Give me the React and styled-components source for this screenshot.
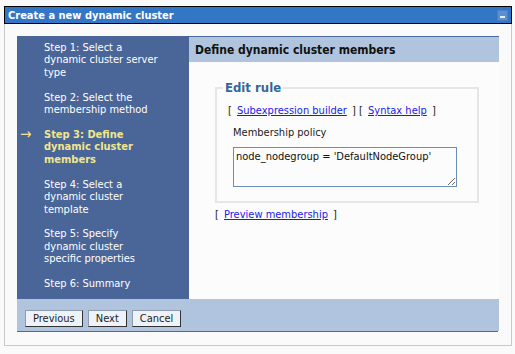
import React from "react";
import styled, { createGlobalStyle } from "styled-components";

const GlobalStyle = createGlobalStyle`
  html, body {
    margin: 0;
    background: #fafafa;
  }
  body {
    font-family: Tahoma, "DejaVu Sans Condensed", "DejaVu Sans", sans-serif;
    font-size: 11px;
  }
`;

const Page = styled.div`
  padding: 6px 3px 0 4px;
  width: 508px;
`;

const TitleBar = styled.div`
  display: flex;
  align-items: center;
  justify-content: space-between;
  height: 16px;
  padding: 0 3px 0 3px;
  background: #3376c6;
  border: 1px solid #000;
  color: #fff;
  font-weight: bold;
  font-size: 11px;
`;

const MinButton = styled.div`
  width: 11px;
  height: 11px;
  background: #5b8fd0;
  border: 1px solid #4a80c4;
  box-sizing: border-box;
  display: flex;
  align-items: flex-end;
  justify-content: center;
  padding-bottom: 2px;

  &::after {
    content: "";
    width: 5px;
    height: 2px;
    background: #e6eef8;
  }
`;

const Body = styled.div`
  border: 1px solid #c8c8c8;
  border-top: none;
  padding: 12px;
  height: 297px;
`;

const Wizard = styled.div`
  display: grid;
  grid-template-columns: 172px 1fr;
  grid-template-rows: 263px 32px;
  width: 480px;
  border: 1px solid #4a6aa3;
  border-left: none;
  border-top: none;
`;

const Nav = styled.ul`
  list-style: none;
  margin: 0;
  padding: 6px 0 0 0;
  overflow: hidden;
  background: #4a6699;
`;

const Step = styled.li`
  position: relative;
  width: 118px;
  padding-left: 27px;
  margin-bottom: 12.5px;
  line-height: 12.4px;
  color: ${(p) => (p.$current ? "#f0e68c" : "#fff")};
  font-weight: ${(p) => (p.$current ? "bold" : "normal")};
`;

const Arrow = styled.span`
  position: absolute;
  left: 3px;
  top: -1px;
  font-size: 15px;
  font-weight: normal;
`;

const Content = styled.div`
  background: #fcfcfc;
  border-top: 1px solid #4a6aa3;
`;

const Header = styled.div`
  height: 25px;
  display: flex;
  align-items: center;
  padding-left: 6px;
  background: #b0c4de;
  color: #111;
  font-size: 12px;
  font-weight: bold;
`;

const Main = styled.div`
  padding: 18px 20px 0 26px;
`;

const Fieldset = styled.fieldset`
  margin: 0;
  padding: 9px 10px 14px 11px;
  border: 2px solid #e6e6e6;
  width: 239px;
`;

const Legend = styled.legend`
  padding: 0 2px;
  margin-left: -5px;
  color: #336699;
  font-size: 13px;
  font-weight: bold;
`;

const LinkRow = styled.div`
  color: #222;
  margin: ${(p) => p.$margin || "0"};
`;

const Link = styled.a`
  margin: 0 2px;
  color: #1a1ae6;
  text-decoration: underline;
`;

const Label = styled.div`
  color: #222;
  margin: 9px 0 8px 5px;
`;

const TextArea = styled.textarea`
  display: block;
  box-sizing: border-box;
  width: 224px;
  height: 40px;
  margin-left: 5px;
  padding: 2px;
  border: 1px solid #6b8dbb;
  background: #fcfcfc;
  color: #111;
  font-family: Tahoma, "DejaVu Sans Condensed", "DejaVu Sans", sans-serif;
  font-size: 11px;
  resize: both;
`;

const Footer = styled.div`
  grid-column: 1 / 3;
  display: flex;
  gap: 5px;
  align-items: flex-start;
  padding: 11px 0 0 8px;
  background: #b0c4de;
`;

const Button = styled.button`
  height: 17px;
  padding: 0 7px;
  background: #eef2f9;
  border: 1px solid #8d9bb0;
  border-right-color: #333;
  border-bottom-color: #333;
  color: #222;
  font-family: Tahoma, "DejaVu Sans Condensed", "DejaVu Sans", sans-serif;
  font-size: 11px;
  cursor: pointer;
`;

const steps = [
  "Step 1: Select a dynamic cluster server type",
  "Step 2: Select the membership method",
  "Step 3: Define dynamic cluster members",
  "Step 4: Select a dynamic cluster template",
  "Step 5: Specify dynamic cluster specific properties",
  "Step 6: Summary",
];

export default function App() {
  return (
    <Page>
      <GlobalStyle />
      <TitleBar>
        <span>Create a new dynamic cluster</span>
        <MinButton />
      </TitleBar>
      <Body>
        <Wizard>
          <Nav>
            {steps.map((s, i) => (
              <Step key={s} $current={i === 2}>
                {i === 2 && <Arrow>→</Arrow>}
                {s}
              </Step>
            ))}
          </Nav>
          <Content>
            <Header>Define dynamic cluster members</Header>
            <Main>
              <Fieldset>
                <Legend>Edit rule</Legend>
                <LinkRow>
                  [ <Link href="#">Subexpression builder</Link> ] [{" "}
                  <Link href="#">Syntax help</Link> ]
                </LinkRow>
                <Label>Membership policy</Label>
                <TextArea defaultValue="node_nodegroup = 'DefaultNodeGroup'" />
              </Fieldset>
              <LinkRow $margin="5px 0 0 0">
                [ <Link href="#">Preview membership</Link> ]
              </LinkRow>
            </Main>
          </Content>
          <Footer>
            <Button>Previous</Button>
            <Button>Next</Button>
            <Button>Cancel</Button>
          </Footer>
        </Wizard>
      </Body>
    </Page>
  );
}
